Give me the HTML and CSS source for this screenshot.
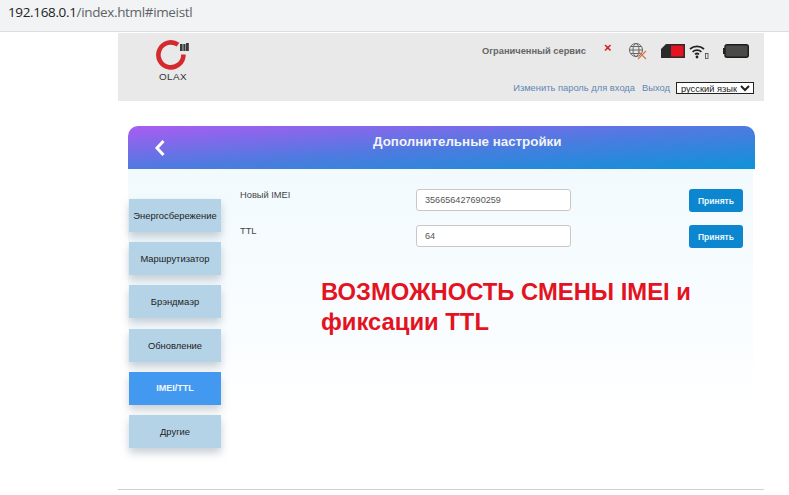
FILE: index.html
```
<!DOCTYPE html>
<html lang="ru">
<head>
<meta charset="utf-8">
<title>OLAX</title>
<link rel="stylesheet" href="styles.css">
</head>
<body>
<div class="urlbar"><span class="host">192.168.0.1</span><span class="path">/index.html#imeistl</span></div>
<div class="page">
  <header class="top">
    <div class="logo">
      <svg class="logo-mark" width="36" height="32" viewBox="0 0 36 32">
        <path d="M23 4.600A12.500 12.500 0 1 0 28.400 14.500" fill="none" stroke="#d42a2e" stroke-width="4.600"/>
        <rect x="25" y="4" width="2.600" height="7" fill="#3a3a3a"/>
        <rect x="28.300" y="4" width="2.200" height="7" fill="#3a3a3a"/>
        <rect x="31" y="3" width="2.800" height="8" fill="#3a3a3a"/>
      </svg>
      <div class="logo-text">OLAX</div>
    </div>
    <div class="top-right">
      <div class="status">
        <span class="service">Ограниченный сервис</span>
        <span class="cross">×</span>
        <svg class="globe" width="20" height="18" viewBox="0 0 20 18">
          <g fill="none" stroke="#666" stroke-width="1">
            <circle cx="8" cy="8" r="6.500"/><ellipse cx="8" cy="8" rx="3" ry="6.500"/>
            <path d="M1.500 8h13M2.500 4.500h11M2.500 11.500h11"/>
          </g>
          <path d="M10 9l8 8M18 9l-8 8" stroke="#d9764e" stroke-width="1.200"/>
        </svg>
        <svg class="sim" width="24" height="14" viewBox="0 0 24 14">
          <path d="M5 0H24V14H0V5z" fill="#2b2b2b"/>
          <rect x="10" y="1.500" width="12.500" height="11" fill="#e3131f"/>
        </svg>
        <svg class="wifi" width="20" height="16" viewBox="0 0 20 16">
          <g fill="none" stroke="#222" stroke-width="1.700">
            <path d="M1 6a10.500 10.500 0 0 1 14 0M3.600 8.800a6.600 6.600 0 0 1 8.800 0M6 11.300a3.200 3.200 0 0 1 4 0"/>
          </g>
          <circle cx="8" cy="14" r="1.400" fill="#222"/>
          <rect x="16.500" y="10.500" width="2.500" height="5" fill="none" stroke="#444" stroke-width=".8"/>
        </svg>
        <svg class="battery" width="26" height="14" viewBox="0 0 26 14">
          <rect x="2" y="0.700" width="23.300" height="12.600" rx="2" fill="#4a4a48" stroke="#1c1c1c" stroke-width="1.400"/>
          <rect x="0" y="4" width="2" height="6" fill="#222"/>
        </svg>
      </div>
      <div class="links">
        <a class="link" href="#">Изменить пароль для входа</a>
        <a class="link" href="#">Выход</a>
        <select class="lang"><option>русский язык</option></select>
      </div>
    </div>
  </header>
  <section class="panel">
    <div class="panel-head">
      <svg class="back" width="12" height="18" viewBox="0 0 12 18"><path d="M9.500 2L3 9l6.500 7" fill="none" stroke="#fff" stroke-width="3"/></svg>
      <h1 class="title">Дополнительные настройки</h1>
    </div>
    <div class="panel-body">
      <nav class="menu">
        <div class="item">Энергосбережение</div>
        <div class="item">Маршрутизатор</div>
        <div class="item">Брэндмаэр</div>
        <div class="item">Обновление</div>
        <div class="item active">IMEI/TTL</div>
        <div class="item">Другие</div>
      </nav>
      <div class="content">
        <div class="row">
          <label class="label">Новый IMEI</label>
          <input class="field" value="356656427690259">
          <button class="apply">Принять</button>
        </div>
        <div class="row">
          <label class="label">TTL</label>
          <input class="field" value="64">
          <button class="apply">Принять</button>
        </div>
        <p class="note">ВОЗМОЖНОСТЬ СМЕНЫ IMEI и фиксации TTL</p>
      </div>
    </div>
  </section>
</div>
<div class="rule"></div>
</body>
</html>
```
FILE: styles.css
```
* { box-sizing: border-box; }
html, body { margin: 0; padding: 0; }
body { width: 789px; height: 495px; overflow: hidden; background: #fff; font-family: "Liberation Sans", Arial, sans-serif; }
.urlbar { height: 32px; background: #f1f3f4; border-bottom: 1px solid #dcdcdc; padding: 0 0 0 8px; font-size: 13.500px; line-height: 24px; font-family: "Open Sans", "Liberation Sans", sans-serif; letter-spacing: -0.35px; }
.host { color: #222; }
.path { color: #5f6368; }
.page { margin-left: 118px; width: 646px; }
.top { height: 68px; margin-top: 1px; background: #e9e9e9; display: flex; justify-content: space-between; }
.logo { width: 36px; margin: 7px 0 0 37px; }
.logo-mark { display: block; }
.logo-text { font-size: 9px; line-height: 10px; letter-spacing: .4px; color: #333; margin-top: 0; text-align: center; transform: scaleX(1.1); }
.top-right { width: 300px; padding-right: 10px; display: flex; flex-direction: column; align-items: flex-end; }
.status { display: flex; align-items: center; height: 22px; margin-top: 7px; padding-right: 5px; }
.service { font-size: 9.300px; font-weight: bold; color: #666; width: 122px; white-space: nowrap; }
.cross { color: #d01c24; font-size: 13px; font-weight: bold; width: 24px; margin-top: -6px; line-height: 14px; }
.globe { margin-right: 13px; }
.sim { margin-right: 4px; }
.wifi { margin-right: 14px; }
.links { display: flex; align-items: center; margin-top: 20px; }
.link { font-size: 9.350px; color: #5f87b5; text-decoration: none; margin-right: 7px; white-space: nowrap; }
.lang { width: 78px; height: 12px; font-size: 9.300px; padding: 0; border: 1px solid #222; border-radius: 0; background: #fff; font-family: "Liberation Sans", sans-serif; color: #222; margin-left: -1px; }
.panel { width: 627px; margin: 25px 0 0 10px; }
.panel-head { height: 43px; border-radius: 10px 10px 0 0; background: linear-gradient(to bottom right, #a95cf2 0%, #4f7ae0 50%, #0d93d8 100%); display: flex; padding: 0 0 0 26px; position: relative; }
.back { margin-top: 13px; }
.title { position: absolute; left: 245px; top: 8px; margin: 0; font-size: 13.350px; line-height: 16px; font-weight: bold; color: #f3f3fa; white-space: nowrap; }
.panel-body { height: 232px; margin-right: 2px; background: linear-gradient(#f2fafd, #fafdff 75%, #fff); display: flex; }
.menu { width: 93px; padding: 30px 0 0 1px; display: flex; flex-direction: column; gap: 10.200px; }
.item { width: 92px; height: 33px; flex: none; background: #b5d3e7; box-shadow: 0 5px 8px rgba(100, 120, 140, .35); font-size: 9.400px; color: #222; display: flex; align-items: center; justify-content: center; white-space: nowrap; }
.item.active { background: #4399f0; color: #f0f8ff; font-weight: bold; font-size: 9px; }
.content { flex: 1; padding: 20px 10px 0 19px; position: relative; }
.row { display: flex; align-items: flex-start; height: 36px; }
.label { width: 176px; font-size: 9.300px; color: #444; line-height: 10px; padding-top: 1px; }
.field { width: 155px; height: 22px; margin-top: 0; border: 1px solid #c8c8c8; border-radius: 3px; padding: 0 8px; font-size: 9.100px; color: #555; font-family: "Liberation Sans", sans-serif; background: #fff; }
.apply { width: 54px; height: 23px; margin-left: auto; border: 0; border-radius: 3px; background: #0b86cf; color: #e8f6ff; font-size: 8.500px; font-weight: bold; font-family: "Liberation Sans", sans-serif; padding: 0; }
.note { position: absolute; left: 100px; top: 108px; width: 400px; margin: 0; font-size: 23.800px; line-height: 30px; font-weight: bold; color: #e3131f; }
.rule { width: 646px; margin: 88px 0 0 118px; border-top: 1px solid #d0d0d0; }
```
